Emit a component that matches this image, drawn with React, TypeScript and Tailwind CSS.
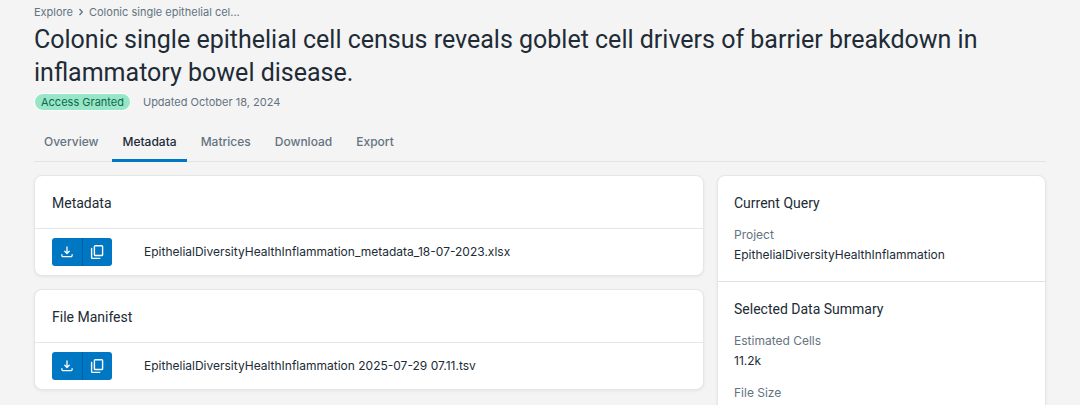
import type { ReactNode } from "react";

const TABS = ["Overview", "Metadata", "Matrices", "Download", "Export"];

const PANEL =
  "rounded-lg border border-[#e6e6e6] bg-white shadow-[0_1px_3px_rgba(0,0,0,0.07)]";

function DownloadIcon() {
  return (
    <svg
      viewBox="0 0 18 18"
      className="size-[18px]"
      fill="none"
      stroke="currentColor"
      strokeWidth="1.3"
      strokeLinecap="round"
      strokeLinejoin="round"
      aria-hidden="true"
    >
      <path d="M9 4v6.2M6.8 8.3 9 10.5l2.2-2.2" />
      <path d="M3.9 11.6v.8a1.2 1.2 0 0 0 1.2 1.2h7.8a1.2 1.2 0 0 0 1.2-1.2v-.8" />
    </svg>
  );
}

function CopyIcon() {
  return (
    <svg
      viewBox="0 0 18 18"
      className="size-[18px]"
      fill="none"
      stroke="currentColor"
      strokeWidth="1.4"
      strokeLinecap="round"
      strokeLinejoin="round"
      aria-hidden="true"
    >
      <rect x="6.4" y="2.7" width="8.2" height="9.8" rx="0.8" />
      <path d="M3.6 5.5v9a.9.9 0 0 0 .9.9h7.2" />
    </svg>
  );
}

function FilePanel({ title, file }: { title: string; file: string }) {
  return (
    <section className={PANEL}>
      <h2 className="border-b border-[#e6e6e6] px-[17px] pt-[17px] pb-[15px] font-['Roboto',sans-serif] text-sm leading-5">
        {title}
      </h2>
      <div className="flex items-center px-[17px] py-[9px]">
        <div className="flex h-7 w-[60px] shrink-0 overflow-hidden rounded-[3px] bg-[#0077c2] text-white">
          <button
            type="button"
            aria-label={`Download ${file}`}
            className="flex flex-1 items-center justify-center border-r border-[#0061a6]"
          >
            <DownloadIcon />
          </button>
          <button
            type="button"
            aria-label={`Copy link to ${file}`}
            className="flex flex-1 items-center justify-center"
          >
            <CopyIcon />
          </button>
        </div>
        <span className="ml-8 min-w-0 truncate text-xs leading-4">{file}</span>
      </div>
    </section>
  );
}

function Detail({ label, children }: { label: string; children?: ReactNode }) {
  return (
    <div>
      <dt className="leading-4 text-[#637381]">{label}</dt>
      <dd className="mt-1 leading-4">{children}</dd>
    </div>
  );
}

function SideSection({
  title,
  children,
}: {
  title: string;
  children: ReactNode;
}) {
  return (
    <section className="border-t border-[#e0e0e0] px-4 pt-[17px] pb-[18px] first:border-t-0">
      <h2 className="font-['Roboto',sans-serif] text-sm leading-5">{title}</h2>
      <dl className="mt-3.5 flex flex-col gap-4 text-xs">{children}</dl>
    </section>
  );
}

export default function App() {
  return (
    <div className="h-screen overflow-hidden bg-[#f4f4f4] px-[34px] pt-[3px] font-['Inter',sans-serif] text-[#212b36]">
      <header>
        <nav aria-label="Breadcrumb">
          <ol className="flex items-center gap-[5px] text-[11px] leading-[18px] text-[#637381]">
            <li>
              <a href="#explore">Explore</a>
            </li>
            <li aria-hidden="true">
              <svg
                viewBox="0 0 6 8"
                className="h-2 w-1.5"
                fill="none"
                stroke="currentColor"
                strokeWidth="1.3"
              >
                <path d="m1.5 1 2.8 3-2.8 3" />
              </svg>
            </li>
            <li>Colonic single epithelial cel...</li>
          </ol>
        </nav>
        <h1 className="mt-0.5 font-['Roboto',sans-serif] text-[25px] leading-[33px]">
          Colonic single epithelial cell census reveals goblet cell drivers of
          barrier breakdown in inflammatory bowel disease.
        </h1>
        <div className="mt-1 flex items-center gap-3 text-[11px] leading-4">
          <span className="rounded-full border border-white bg-[#97e6c8] px-1.5 text-[#10694a]">
            Access Granted
          </span>
          <span className="text-[#637381]">Updated October 18, 2024</span>
        </div>
      </header>

      <div
        role="tablist"
        className="mt-[10px] flex gap-1 border-b border-[#e3e3e3]"
      >
        {TABS.map((tab) => (
          <button
            key={tab}
            type="button"
            role="tab"
            aria-selected={tab === "Metadata"}
            className="-mb-px border-b-3 border-transparent px-2.5 pt-[13px] pb-[9px] text-xs leading-4 font-medium text-[#637381] aria-selected:border-[#0077c2] aria-selected:text-[#212b36]"
          >
            {tab}
          </button>
        ))}
      </div>

      <main className="mt-[13px] grid grid-cols-[minmax(0,1fr)_329px] items-start gap-[13px]">
        <div className="flex flex-col gap-[13px]">
          <FilePanel
            title="Metadata"
            file="EpithelialDiversityHealthInflammation_metadata_18-07-2023.xlsx"
          />
          <FilePanel
            title="File Manifest"
            file="EpithelialDiversityHealthInflammation 2025-07-29 07.11.tsv"
          />
        </div>
        <aside className={PANEL}>
          <SideSection title="Current Query">
            <Detail label="Project">
              EpithelialDiversityHealthInflammation
            </Detail>
          </SideSection>
          <SideSection title="Selected Data Summary">
            <Detail label="Estimated Cells">11.2k</Detail>
            <Detail label="File Size" />
          </SideSection>
        </aside>
      </main>
    </div>
  );
}
